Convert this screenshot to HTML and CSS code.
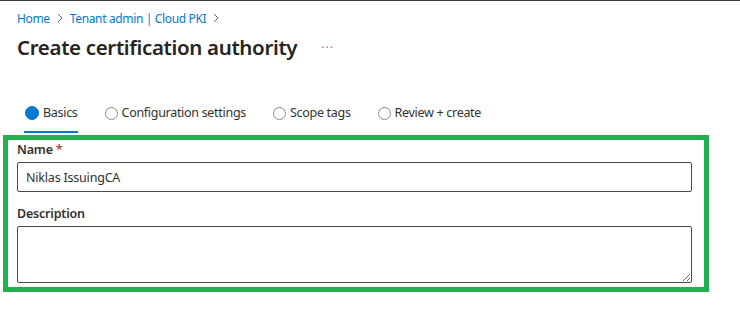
FILE: index.html
```html
<!DOCTYPE html>
<html>
<head>
<meta charset="utf-8">
<link rel="stylesheet" href="styles.css">
</head>
<body>
<div class="page">
  <nav class="crumbs">
    <a class="crumb">Home</a>
    <span class="chev"><svg width="8" height="10" viewBox="0 0 8 10"><path d="M2 1 L6 5 L2 9" fill="none" stroke="#605e5c" stroke-width="1"/></svg></span>
    <a class="crumb">Tenant admin | Cloud PKI</a>
    <span class="chev"><svg width="8" height="10" viewBox="0 0 8 10"><path d="M2 1 L6 5 L2 9" fill="none" stroke="#605e5c" stroke-width="1"/></svg></span>
  </nav>
  <div class="titlebar">
    <h1 class="title">Create certification authority</h1>
    <span class="more">···</span>
  </div>
  <div class="tabs">
    <div class="tab active">
      <span class="dot filled"></span><span class="tab-label">Basics</span>
    </div>
    <div class="tab">
      <span class="dot"></span><span class="tab-label">Configuration settings</span>
    </div>
    <div class="tab">
      <span class="dot"></span><span class="tab-label">Scope tags</span>
    </div>
    <div class="tab">
      <span class="dot"></span><span class="tab-label">Review + create</span>
    </div>
  </div>
  <div class="form">
    <label class="label">Name <span class="req">*</span></label>
    <input class="input" type="text" value="Niklas IssuingCA">
    <label class="label desc-label">Description</label>
    <textarea class="textarea"></textarea>
  </div>
</div>
</body>
</html>
```

FILE: styles.css
```css
html, body {
  margin: 0;
  padding: 0;
  background: #ffffff;
}
body {
  font-family: "Noto Sans", "Open Sans", sans-serif;
  color: #323130;
  border-top: 1px solid #3b3b3b;
  width: 740px;
  height: 315px;
  overflow: hidden;
}
.page {
  display: flex;
  flex-direction: column;
}
.crumbs {
  display: flex;
  align-items: center;
  padding: 7px 0 0 17px;
  height: 20px;
  font-size: 12px;
  letter-spacing: -0.35px;
}
.crumb {
  color: #0078d4;
}
.chev {
  display: inline-flex;
  align-items: center;
  margin: 0 6px 0 6px;
}
.titlebar {
  display: flex;
  align-items: center;
  padding-left: 17px;
  height: 36px;
  margin-top: 1px;
}
.title {
  margin: 0;
  font-size: 20.5px;
  font-weight: 600;
  letter-spacing: -0.35px;
  color: #252423;
}
.more {
  margin-left: 24px;
  color: #8a8886;
  font-size: 12px;
  letter-spacing: 1px;
}
.tabs {
  display: flex;
  margin-top: 34px;
  padding-left: 24px;
  height: 34px;
}
.tab {
  display: flex;
  align-items: center;
  box-sizing: border-box;
  height: 34px;
  padding-bottom: 4px;
  margin-right: 26px;
  font-size: 12.5px;
  letter-spacing: -0.3px;
  border-bottom: 2px solid transparent;
}
.tab.active {
  border-bottom-color: #0078d4;
}
.dot {
  width: 11px;
  height: 11px;
  border-radius: 50%;
  border: 1.5px solid #8a8886;
  margin-right: 4px;
  margin-left: 1px;
  box-sizing: content-box;
}
.dot.filled {
  background: #0078d4;
  border-color: #0078d4;
  width: 12px;
  height: 12px;
  border-width: 1px;
}
.tab-label {
  line-height: 16px;
}
.form {
  display: flex;
  flex-direction: column;
  box-sizing: border-box;
  margin: 2px 0 0 3px;
  width: 706px;
  height: 157px;
  border: 5px solid #22b14c;
  padding: 1px 12px 4px 9px;
}
.label {
  font-size: 12.5px;
  font-weight: 600;
  letter-spacing: -0.2px;
  line-height: 18px;
  height: 18px;
}
.req {
  color: #a4262c;
  font-weight: 400;
}
.input {
  margin-top: 3px;
  height: 30px;
  box-sizing: border-box;
  border: 1px solid #4a4a4a;
  border-radius: 2px;
  padding: 0 8px;
  font-family: "Noto Sans", "Open Sans", sans-serif;
  font-size: 12.5px;
  letter-spacing: -0.2px;
  color: #323130;
  outline: none;
}
.desc-label {
  margin-top: 13px;
}
.textarea {
  margin-top: 3px;
  height: 57px;
  box-sizing: border-box;
  border: 1px solid #4a4a4a;
  border-radius: 2px;
  padding: 4px 8px;
  font-family: "Noto Sans", "Open Sans", sans-serif;
  font-size: 12.5px;
  outline: none;
  resize: both;
}
```
